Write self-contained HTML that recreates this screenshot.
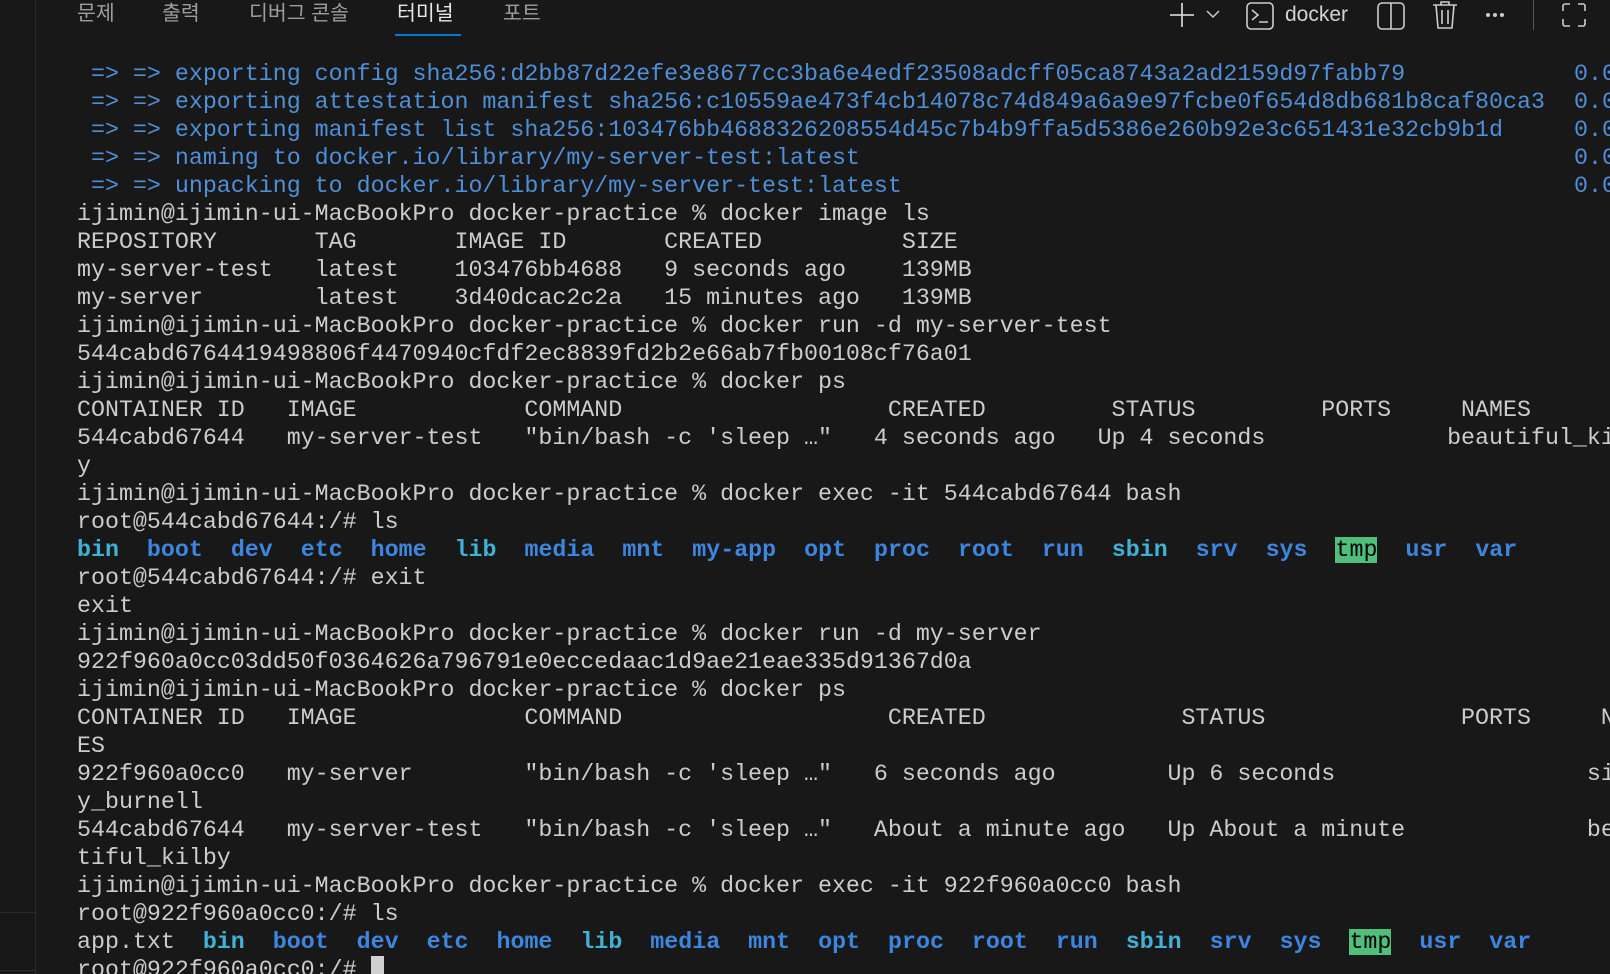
<!DOCTYPE html>
<html><head><meta charset="utf-8">
<style>
html,body{margin:0;padding:0;background:#181818;width:1610px;height:974px;overflow:hidden;}
body{position:relative;font-family:"Liberation Sans","Noto Sans CJK KR",sans-serif;}
.vline{position:absolute;left:35px;top:0;width:1px;height:974px;background:#2b2b2b;}
.hl{position:absolute;left:0;width:35px;height:1px;background:#2b2b2b;}
.tab{position:absolute;top:2px;font-size:20.5px;color:#9d9d9d;line-height:24px;}
.tab.active{color:#e7e7e7;}
.ul{position:absolute;left:395px;top:34px;width:66px;height:2px;background:#0078d4;}
.term{position:absolute;left:77px;top:60px;width:1533px;font-family:"Liberation Mono",monospace;font-size:23.3px;line-height:28px;color:#cccccc;overflow:hidden;}
.term div{height:28px;overflow:hidden;white-space:pre;position:relative;}
.e{color:#4f8fd8;}
.z{position:absolute;left:1497px;top:0;}
.c{color:#40b2d6;font-weight:bold;}
.b{color:#3d86e0;font-weight:bold;}
.t{background:#4fbf7b;color:#000;}
.cur{display:inline-block;width:13px;height:24px;background:#d0d0d0;vertical-align:-4px;}
svg{position:absolute;}
.dk{position:absolute;left:1285px;top:3px;font-size:21px;color:#d4d4d4;}
</style></head><body>
<div class="vline"></div>
<div class="hl" style="top:912px"></div>
<div class="hl" style="top:970px"></div>
<div class="tab" style="left:77px">문제</div>
<div class="tab" style="left:162px">출력</div>
<div class="tab" style="left:249px">디버그 콘솔</div>
<div class="tab active" style="left:397px">터미널</div>
<div class="tab" style="left:503px">포트</div>
<div class="ul"></div>

<svg style="left:1169px;top:2px" width="26" height="26" viewBox="0 0 26 26"><path d="M13 1v24M1 13h24" stroke="#cccccc" stroke-width="1.8" fill="none"/></svg>
<svg style="left:1206px;top:9px" width="14" height="10" viewBox="0 0 14 10"><path d="M1 2l6 6 6-6" stroke="#cccccc" stroke-width="1.5" fill="none"/></svg>
<svg style="left:1246px;top:2px" width="28" height="28" viewBox="0 0 28 28"><rect x="1" y="1" width="26" height="26" rx="4" stroke="#cccccc" stroke-width="1.6" fill="none"/><path d="M6 8l6 5-6 5M13 20h9" stroke="#cccccc" stroke-width="1.6" fill="none"/></svg>
<div class="dk">docker</div>
<svg style="left:1377px;top:2px" width="28" height="28" viewBox="0 0 28 28"><rect x="1" y="1" width="26" height="26" rx="4" stroke="#cccccc" stroke-width="1.6" fill="none"/><path d="M14 1v26" stroke="#cccccc" stroke-width="1.6"/></svg>
<svg style="left:1432px;top:0px" width="26" height="30" viewBox="0 0 26 30"><path d="M1 5h24M9 5V2h8v3M4 5l2 23h14l2-23M10 10v14M16 10v14" stroke="#cccccc" stroke-width="1.6" fill="none"/></svg>
<svg style="left:1485px;top:12px" width="20" height="6" viewBox="0 0 20 6"><circle cx="3" cy="3" r="2" fill="#cccccc"/><circle cx="10" cy="3" r="2" fill="#cccccc"/><circle cx="17" cy="3" r="2" fill="#cccccc"/></svg>
<div style="position:absolute;left:1533px;top:0;width:1px;height:30px;background:#555"></div>
<svg style="left:1562px;top:3px" width="24" height="24" viewBox="0 0 24 24"><path d="M1 8V3a2 2 0 0 1 2-2h5M16 1h5a2 2 0 0 1 2 2v5M23 16v5a2 2 0 0 1-2 2h-5M8 23H3a2 2 0 0 1-2-2v-5" stroke="#cccccc" stroke-width="1.6" fill="none"/></svg>

<div class="term"><div class="e"> =&gt; =&gt; exporting config sha256:d2bb87d22efe3e8677cc3ba6e4edf23508adcff05ca8743a2ad2159d97fabb79<span class="z">0.0</span></div><div class="e"> =&gt; =&gt; exporting attestation manifest sha256:c10559ae473f4cb14078c74d849a6a9e97fcbe0f654d8db681b8caf80ca3<span class="z">0.0</span></div><div class="e"> =&gt; =&gt; exporting manifest list sha256:103476bb4688326208554d45c7b4b9ffa5d5386e260b92e3c651431e32cb9b1d<span class="z">0.0</span></div><div class="e"> =&gt; =&gt; naming to docker.io/library/my-server-test:latest<span class="z">0.0</span></div><div class="e"> =&gt; =&gt; unpacking to docker.io/library/my-server-test:latest<span class="z">0.0</span></div><div>ijimin@ijimin-ui-MacBookPro docker-practice % docker image ls</div><div>REPOSITORY       TAG       IMAGE ID       CREATED          SIZE</div><div>my-server-test   latest    103476bb4688   9 seconds ago    139MB</div><div>my-server        latest    3d40dcac2c2a   15 minutes ago   139MB</div><div>ijimin@ijimin-ui-MacBookPro docker-practice % docker run -d my-server-test</div><div>544cabd6764419498806f4470940cfdf2ec8839fd2b2e66ab7fb00108cf76a01</div><div>ijimin@ijimin-ui-MacBookPro docker-practice % docker ps</div><div>CONTAINER ID   IMAGE            COMMAND                   CREATED         STATUS         PORTS     NAMES</div><div>544cabd67644   my-server-test   "bin/bash -c 'sleep …"   4 seconds ago   Up 4 seconds             beautiful_kilb</div><div>y</div><div>ijimin@ijimin-ui-MacBookPro docker-practice % docker exec -it 544cabd67644 bash</div><div>root@544cabd67644:/# ls</div><div><span class="c">bin</span>  <span class="b">boot</span>  <span class="b">dev</span>  <span class="b">etc</span>  <span class="b">home</span>  <span class="c">lib</span>  <span class="b">media</span>  <span class="b">mnt</span>  <span class="b">my-app</span>  <span class="b">opt</span>  <span class="b">proc</span>  <span class="b">root</span>  <span class="b">run</span>  <span class="c">sbin</span>  <span class="b">srv</span>  <span class="b">sys</span>  <span class="t">tmp</span>  <span class="b">usr</span>  <span class="b">var</span></div><div>root@544cabd67644:/# exit</div><div>exit</div><div>ijimin@ijimin-ui-MacBookPro docker-practice % docker run -d my-server</div><div>922f960a0cc03dd50f0364626a796791e0eccedaac1d9ae21eae335d91367d0a</div><div>ijimin@ijimin-ui-MacBookPro docker-practice % docker ps</div><div>CONTAINER ID   IMAGE            COMMAND                   CREATED              STATUS              PORTS     NAM</div><div>ES</div><div>922f960a0cc0   my-server        "bin/bash -c 'sleep …"   6 seconds ago        Up 6 seconds                  si</div><div>y_burnell</div><div>544cabd67644   my-server-test   "bin/bash -c 'sleep …"   About a minute ago   Up About a minute             be</div><div>tiful_kilby</div><div>ijimin@ijimin-ui-MacBookPro docker-practice % docker exec -it 922f960a0cc0 bash</div><div>root@922f960a0cc0:/# ls</div><div>app.txt  <span class="c">bin</span>  <span class="b">boot</span>  <span class="b">dev</span>  <span class="b">etc</span>  <span class="b">home</span>  <span class="c">lib</span>  <span class="b">media</span>  <span class="b">mnt</span>  <span class="b">opt</span>  <span class="b">proc</span>  <span class="b">root</span>  <span class="b">run</span>  <span class="c">sbin</span>  <span class="b">srv</span>  <span class="b">sys</span>  <span class="t">tmp</span>  <span class="b">usr</span>  <span class="b">var</span></div><div>root@922f960a0cc0:/# <span class="cur"></span></div></div>
</body></html>
